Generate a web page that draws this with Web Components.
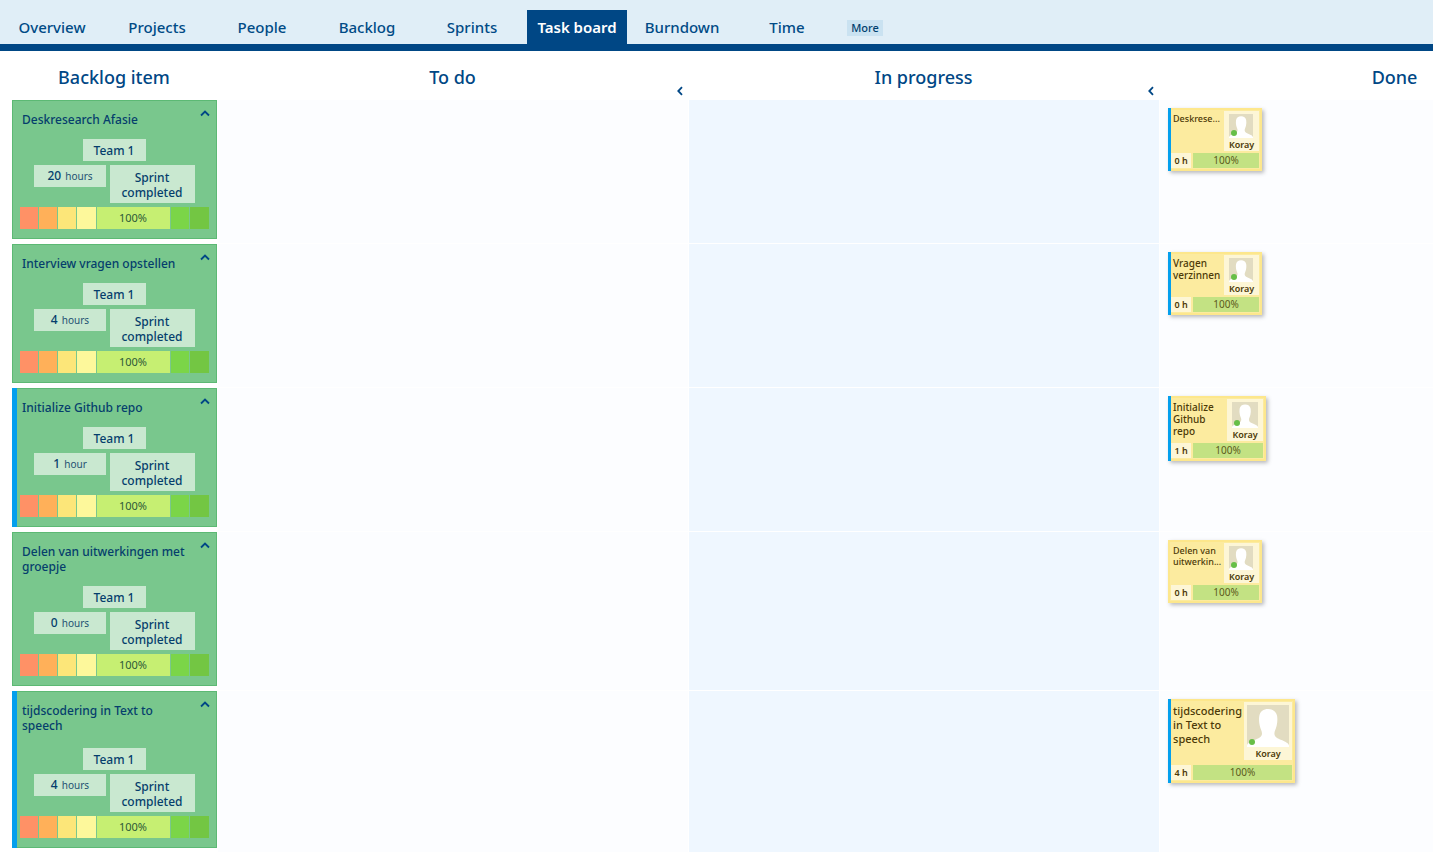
<!DOCTYPE html>
<html lang="en">
<head>
<meta charset="utf-8">
<title>Task board</title>
<style>
html, body { margin: 0; background: #fff; }
body { font-family: "Noto Sans", "Open Sans", sans-serif; font-weight: 500; color: #004785; }
</style>
</head>
<body>
<task-board-app></task-board-app>
<script>
const define = (name, html) => customElements.define(name, class extends HTMLElement {
  connectedCallback() {
    if (this.shadowRoot) return;
    const t = document.createElement('template');
    t.innerHTML = typeof html === 'function' ? html(this) : html;
    this.attachShadow({ mode: 'open' }).append(t.content.cloneNode(true));
  }
});

define('nav-tab', el => `
<style>
:host { display: block; width: 100px; height: 34px; margin-right: 5px; }
a { display: block; line-height: 34px; font-size: 15px; text-align: center; text-decoration: none; white-space: nowrap; color: #004b86; }
:host([active]) a { background: #004785; color: #fff; font-weight: 600; }
</style>
<a href="#"${el.hasAttribute('active') ? ' aria-current="page"' : ''}><slot></slot></a>`);

define('nav-bar', `
<style>
:host { display: block; background: #e0eef7; border-bottom: 7px solid #004785; }
nav { display: flex; align-items: flex-end; padding: 10px 0 0 2px; }
button { align-self: center; margin: 2px 0 0 5px; border: 0; padding: 0; width: 36px; height: 16px; background: #cae2f1; color: #003f6e; font: 500 11px/16px "Noto Sans", sans-serif; }
</style>
<nav>
<nav-tab>Overview</nav-tab><nav-tab>Projects</nav-tab><nav-tab>People</nav-tab><nav-tab>Backlog</nav-tab><nav-tab>Sprints</nav-tab><nav-tab active>Task board</nav-tab><nav-tab>Burndown</nav-tab><nav-tab>Time</nav-tab>
<button>More</button>
</nav>`);

define('column-title', el => `
<style>
:host { display: grid; height: 49px; }
h2, button { grid-area: 1 / 1; }
h2 { margin: 0; font-size: 18px; line-height: 25px; font-weight: 500; text-align: center; padding: 14px 1px 0 0; }
button { justify-self: end; align-self: end; border: 0; padding: 4px 5px; background: none; color: inherit; }
svg { display: block; }
</style>
<h2><slot></slot></h2>
${el.hasAttribute('collapsible') ? '<button aria-label="Collapse column"><svg width="7" height="10" viewBox="0 0 7 10"><path d="M6 1.200 2.300 5l3.700 3.800" fill="none" stroke="currentColor" stroke-width="1.800"/></svg></button>' : ''}`);

define('backlog-card', el => `
<style>
:host { display: flex; flex-direction: column; box-sizing: border-box; position: relative; background: #79c78d; border: 1px solid #5cb974; padding: 11px 7px 9px; color: #053e6c; font-size: 12px; line-height: 15px; }
:host([marked])::before { content: ""; position: absolute; left: -1px; top: -1px; bottom: -1px; width: 5px; background: #049fed; }
h3 { margin: 0 16px 12px 2px; font: inherit; }
:host([spaced]) h3 { margin-bottom: 15px; }
.fold { position: absolute; right: 6px; top: 8px; border: 0; padding: 0; background: none; color: #004785; }
.fold svg { display: block; }
.chip { background: #c9e8d0; text-align: center; box-sizing: border-box; padding: 4px 0 3px; }
.team { width: 63px; padding-right: 1px; align-self: center; margin-bottom: 4px; }
.pair { display: flex; justify-content: center; align-items: flex-start; gap: 4px; margin-bottom: 4px; }
.hours { width: 72px; height: 22px; padding: 3px 0 3px; }
.hours small { font-size: 10px; font-weight: 400; margin-left: 1px; color: #1f5272; }
.state { width: 85px; padding: 5px 9px 3px 8px; }
.scale { display: flex; gap: 1px; }
.scale i { width: 18px; height: 22px; }
.scale i.wide { width: 19px; }
.scale b { flex: 1; background: #c6ef72; text-align: center; font-size: 11px; line-height: 22px; font-weight: 400; color: #2c5a38; padding-right: 1px; }
</style>
<button class="fold" aria-label="Fold item"><svg width="10" height="8" viewBox="0 0 10 8"><path d="M1 6.500 5 2.500l4 4" fill="none" stroke="currentColor" stroke-width="1.800"/></svg></button>
<h3><slot></slot></h3>
<div class="chip team">Team 1</div>
<div class="pair"><div class="chip hours">${el.getAttribute('hours')} <small>${el.getAttribute('hours') === '1' ? 'hour' : 'hours'}</small></div><div class="chip state">Sprint completed</div></div>
<div class="scale"><i style="background:#ff9166"></i><i style="background:#ffb059"></i><i style="background:#fce679"></i><i class="wide" style="background:#fdf89b"></i><b>100%</b><i style="background:#7bd548"></i><i class="wide" style="background:#73c643"></i></div>`);

define('user-avatar', `
<style>
:host { display: block; box-sizing: border-box; background: #fdf6d6; padding: 3px 0 0; width: var(--box, 35px); height: var(--tall, 40px); text-align: center; }
svg { display: block; margin: 0 auto; padding-right: var(--nudge, 1px); width: var(--pic, 24px); height: var(--pic, 24px); }
span { display: block; font-size: 9px; line-height: 14px; font-weight: 600; white-space: nowrap; }
</style>
<svg viewBox="0 0 42 42"><rect width="42" height="42" fill="#e2dcc1"/><path d="M0 42v-1.500c.5-2.500 4-4 7.500-5.500 4-1.600 7.500-3 7.500-6.500 0-2.500-1.500-4.500-2.300-8-.7-3-.9-6.500-.4-9.500C13 6.500 16.500 4 21.200 4s8.200 2.500 8.900 7c.5 3 .3 6.500-.4 9.500-.8 3.500-2.300 5.500-2.300 8 0 3.500 3.100 4.900 7.100 6.500 3.500 1.500 7 3 7.500 5.500V42z" fill="#fff"/></svg>
<span>Koray</span>`);

define('task-note', el => `
<style>
:host { display: block; width: max-content; color: #4c3a08; }
article { display: flex; flex-direction: column; justify-content: space-between; box-sizing: border-box; width: 94px; height: 63px; padding: 3px; background: #fceb9f; box-shadow: inset 0 0 0 2px #fde78c, 2px 2px 4px rgba(0,0,0,.27); position: relative; }
:host([marked]) article::before { content: ""; position: absolute; left: 0; top: 0; bottom: 0; width: 3px; background: #049fed; }
.top { display: flex; justify-content: space-between; }
h4 { margin: 2px 0 0 2px; font-weight: 500; font-size: 10px; line-height: 12px; flex: 1; min-width: 0; height: max-content; white-space: nowrap; }
:host([size=tiny]) h4 { font-size: 9px; line-height: 11px; }
:host([size=medium]) article { width: 98px; height: 65px; --box: 36px; --tall: 42px; --pic: 26px; --nudge: 0; }
:host([size=large]) article { width: 127px; height: 84px; --box: 48px; --tall: 58px; --pic: 42px; }
:host([size=large]) h4 { font-size: 11px; line-height: 14px; }
.dot { position: absolute; width: 6px; height: 6px; border-radius: 50%; background: #67bf48; right: 25px; top: 22px; }
:host([size=medium]) .dot { right: 26px; top: 24px; }
:host([size=large]) .dot { top: 40px; right: 40px; }
.foot { display: flex; gap: 2px; text-align: center; line-height: 15px; }
.left { width: 20px; background: #fdf6d6; font-size: 9px; font-weight: 600; }
.done { flex: 1; background: #c3e283; font-size: 10px; font-weight: 400; color: #5c5a1c; }
</style>
<article>
<div class="top"><h4>${el.getAttribute('lines').split('|').join('<br>')}</h4><user-avatar></user-avatar></div>
<span class="dot"></span>
<div class="foot"><div class="left">${el.getAttribute('hours')} h</div><div class="done">100%</div></div>
</article>`);

define('board-lane', `
<style>
:host { display: grid; grid-template-columns: 217px repeat(3, 32.8%); column-gap: 1px; margin-bottom: 1px; }
.item { padding: 0 0 4px 12px; }
.col { background: #fcfdff; }
.busy { background: #eff7ff; }
.done { padding: 8px; }
</style>
<div class="item"><slot name="item"></slot></div><div class="col"></div><div class="col busy"></div><div class="col done"><slot name="done"></slot></div>`);

define('task-board-app', `
<style>
:host { display: block; overflow: hidden; }
.heads { display: grid; grid-template-columns: 217px repeat(3, 32.8%); column-gap: 1px; }
.first { padding-left: 12px; }
</style>
<nav-bar></nav-bar>
<main>
<div class="heads"><column-title class="first">Backlog item</column-title><column-title collapsible>To do</column-title><column-title collapsible>In progress</column-title><column-title>Done</column-title></div>
<board-lane><backlog-card slot="item" hours="20">Deskresearch Afasie</backlog-card><task-note slot="done" marked size="tiny" hours="0" lines="Deskrese..."></task-note></board-lane>
<board-lane><backlog-card slot="item" hours="4">Interview vragen opstellen</backlog-card><task-note slot="done" marked hours="0" lines="Vragen|verzinnen"></task-note></board-lane>
<board-lane><backlog-card slot="item" marked hours="1">Initialize Github repo</backlog-card><task-note slot="done" marked size="medium" hours="1" lines="Initialize|Github|repo"></task-note></board-lane>
<board-lane><backlog-card slot="item" hours="0">Delen van uitwerkingen met groepje</backlog-card><task-note slot="done" size="tiny" hours="0" lines="Delen van|uitwerkin..."></task-note></board-lane>
<board-lane><backlog-card slot="item" marked spaced hours="4">tijdscodering in Text to speech</backlog-card><task-note slot="done" marked size="large" hours="4" lines="tijdscodering|in Text to|speech"></task-note></board-lane>
</main>`);
</script>
</body>
</html>
